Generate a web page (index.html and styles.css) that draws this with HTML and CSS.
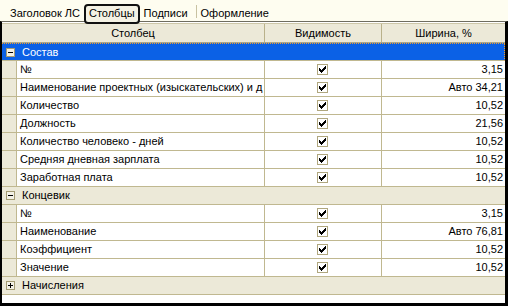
FILE: index.html
```html
<!DOCTYPE html>
<html lang="ru">
<head>
<meta charset="utf-8">
<link rel="stylesheet" href="styles.css">
</head>
<body>
<div class="tabs">
  <span class="tab">Заголовок ЛС</span>
  <span class="tab active">Столбцы</span>
  <span class="tab">Подписи</span>
  <span class="sep"></span>
  <span class="tab">Оформление</span>
</div>
<div class="frame">
  <div class="head">
    <div class="hc c-name">Столбец</div>
    <div class="hc c-vis">Видимость</div>
    <div class="hc c-w last">Ширина, %</div>
  </div>

  <div class="group selected"><span class="exp minus"></span><span class="gt">Состав</span></div>
  <div class="row"><div class="ind"></div><div class="cn">№</div><div class="cv"><span class="cb"></span></div><div class="cw">3,15</div></div>
  <div class="row"><div class="ind"></div><div class="cn">Наименование проектных (изыскательских) и д</div><div class="cv"><span class="cb"></span></div><div class="cw">Авто 34,21</div></div>
  <div class="row"><div class="ind"></div><div class="cn">Количество</div><div class="cv"><span class="cb"></span></div><div class="cw">10,52</div></div>
  <div class="row"><div class="ind"></div><div class="cn">Должность</div><div class="cv"><span class="cb"></span></div><div class="cw">21,56</div></div>
  <div class="row"><div class="ind"></div><div class="cn">Количество человеко - дней</div><div class="cv"><span class="cb"></span></div><div class="cw">10,52</div></div>
  <div class="row"><div class="ind"></div><div class="cn">Средняя дневная зарплата</div><div class="cv"><span class="cb"></span></div><div class="cw">10,52</div></div>
  <div class="row"><div class="ind"></div><div class="cn">Заработная плата</div><div class="cv"><span class="cb"></span></div><div class="cw">10,52</div></div>

  <div class="group"><span class="exp minus"></span><span class="gt">Концевик</span></div>
  <div class="row"><div class="ind"></div><div class="cn">№</div><div class="cv"><span class="cb"></span></div><div class="cw">3,15</div></div>
  <div class="row"><div class="ind"></div><div class="cn">Наименование</div><div class="cv"><span class="cb"></span></div><div class="cw">Авто 76,81</div></div>
  <div class="row"><div class="ind"></div><div class="cn">Коэффициент</div><div class="cv"><span class="cb"></span></div><div class="cw">10,52</div></div>
  <div class="row"><div class="ind"></div><div class="cn">Значение</div><div class="cv"><span class="cb"></span></div><div class="cw">10,52</div></div>

  <div class="group"><span class="exp plus"></span><span class="gt">Начисления</span></div>
</div>
</body>
</html>
```
FILE: styles.css
```css
* { box-sizing: border-box; }
html, body { margin: 0; padding: 0; }
body {
  width: 508px;
  height: 306px;
  background: #fefdf0;
  font-family: "Liberation Sans", Arial, sans-serif;
  font-size: 11px;
  color: #000;
  overflow: hidden;
}
.tabs {
  height: 21px;
  display: flex;
  align-items: flex-start;
  padding-left: 6px;
  padding-top: 4px;
}
.tab {
  height: 17px;
  line-height: 18px;
  padding: 0 4px;
  white-space: nowrap;
}
.tab.active {
  height: 20px;
  border: 2px solid #111;
  border-radius: 4px;
  background: #f4f2e4;
  line-height: 14px;
  padding: 0 3px;
  position: relative;
  z-index: 2;
}
.sep {
  width: 1px;
  height: 13px;
  margin: 1px 0 0 4px;
  background: #c8c2a2;
}
.frame {
  height: 285px;
  border-style: solid;
  border-color: #000;
  border-top-color: #6e6c60;
  border-width: 1px 3px 3px 2px;
  background: #fff;
  padding-top: 1px;
}
.head {
  display: flex;
  height: 20px;
  background: #ece9d8;
  border-top: 1px solid #cdc7a8;
  border-bottom: 1px solid #aca68a;
}
.hc {
  text-align: center;
  line-height: 18px;
  border-right: 1px solid #b9b18a;
}
.hc.c-name { width: 263px; }
.hc.c-vis { width: 117px; }
.hc.c-w { flex: 1; border-right: 0; }

.group {
  height: 18px;
  display: flex;
  align-items: center;
  background: #ece9d8;
  border-bottom: 1px solid #c0b890;
  padding-left: 2px;
}
.group.selected {
  background: #0b61e6;
  color: #fff;
  border-top: 1px dotted #f0a030;
  border-right: 1px dotted #f0a030;
}
.gt { margin-left: 7px; line-height: 17px; }
.exp {
  width: 9px;
  height: 9px;
  border: 1px solid #a49c74;
  background: #f3f1e6;
  position: relative;
  margin-left: 2px;
}
.exp::before {
  content: "";
  position: absolute;
  left: 1px; top: 3px;
  width: 5px; height: 1px;
  background: #000;
}
.exp.plus::after {
  content: "";
  position: absolute;
  left: 3px; top: 1px;
  width: 1px; height: 5px;
  background: #000;
}
.row {
  display: flex;
  height: 18px;
  border-bottom: 1px solid #c0b890;
}
.row > div {
  line-height: 17px;
  white-space: nowrap;
  overflow: hidden;
}
.ind {
  width: 15px;
  background: #ece9d8;
  border-right: 1px solid #c0b890;
}
.cn {
  width: 248px;
  padding-left: 3px;
  border-right: 1px solid #c0b890;
}
.cv {
  width: 117px;
  border-right: 1px solid #c0b890;
  display: flex;
  align-items: center;
  justify-content: center;
}
.cw {
  flex: 1;
  text-align: right;
  padding-right: 2px;
}
.cb {
  width: 11px;
  height: 11px;
  border: 1px solid #b0a77e;
  background: #fff;
  position: relative;
  margin-left: -1px;
}
.cb::before {
  content: "";
  position: absolute;
  left: 1px; top: 1px;
  width: 7px; height: 7px;
  background:
    linear-gradient(#000,#000) 0px 2px / 1px 3px no-repeat,
    linear-gradient(#000,#000) 1px 3px / 1px 3px no-repeat,
    linear-gradient(#000,#000) 2px 4px / 1px 3px no-repeat,
    linear-gradient(#000,#000) 3px 3px / 1px 3px no-repeat,
    linear-gradient(#000,#000) 4px 2px / 1px 3px no-repeat,
    linear-gradient(#000,#000) 5px 1px / 1px 3px no-repeat,
    linear-gradient(#000,#000) 6px 0px / 1px 3px no-repeat;
}
```
